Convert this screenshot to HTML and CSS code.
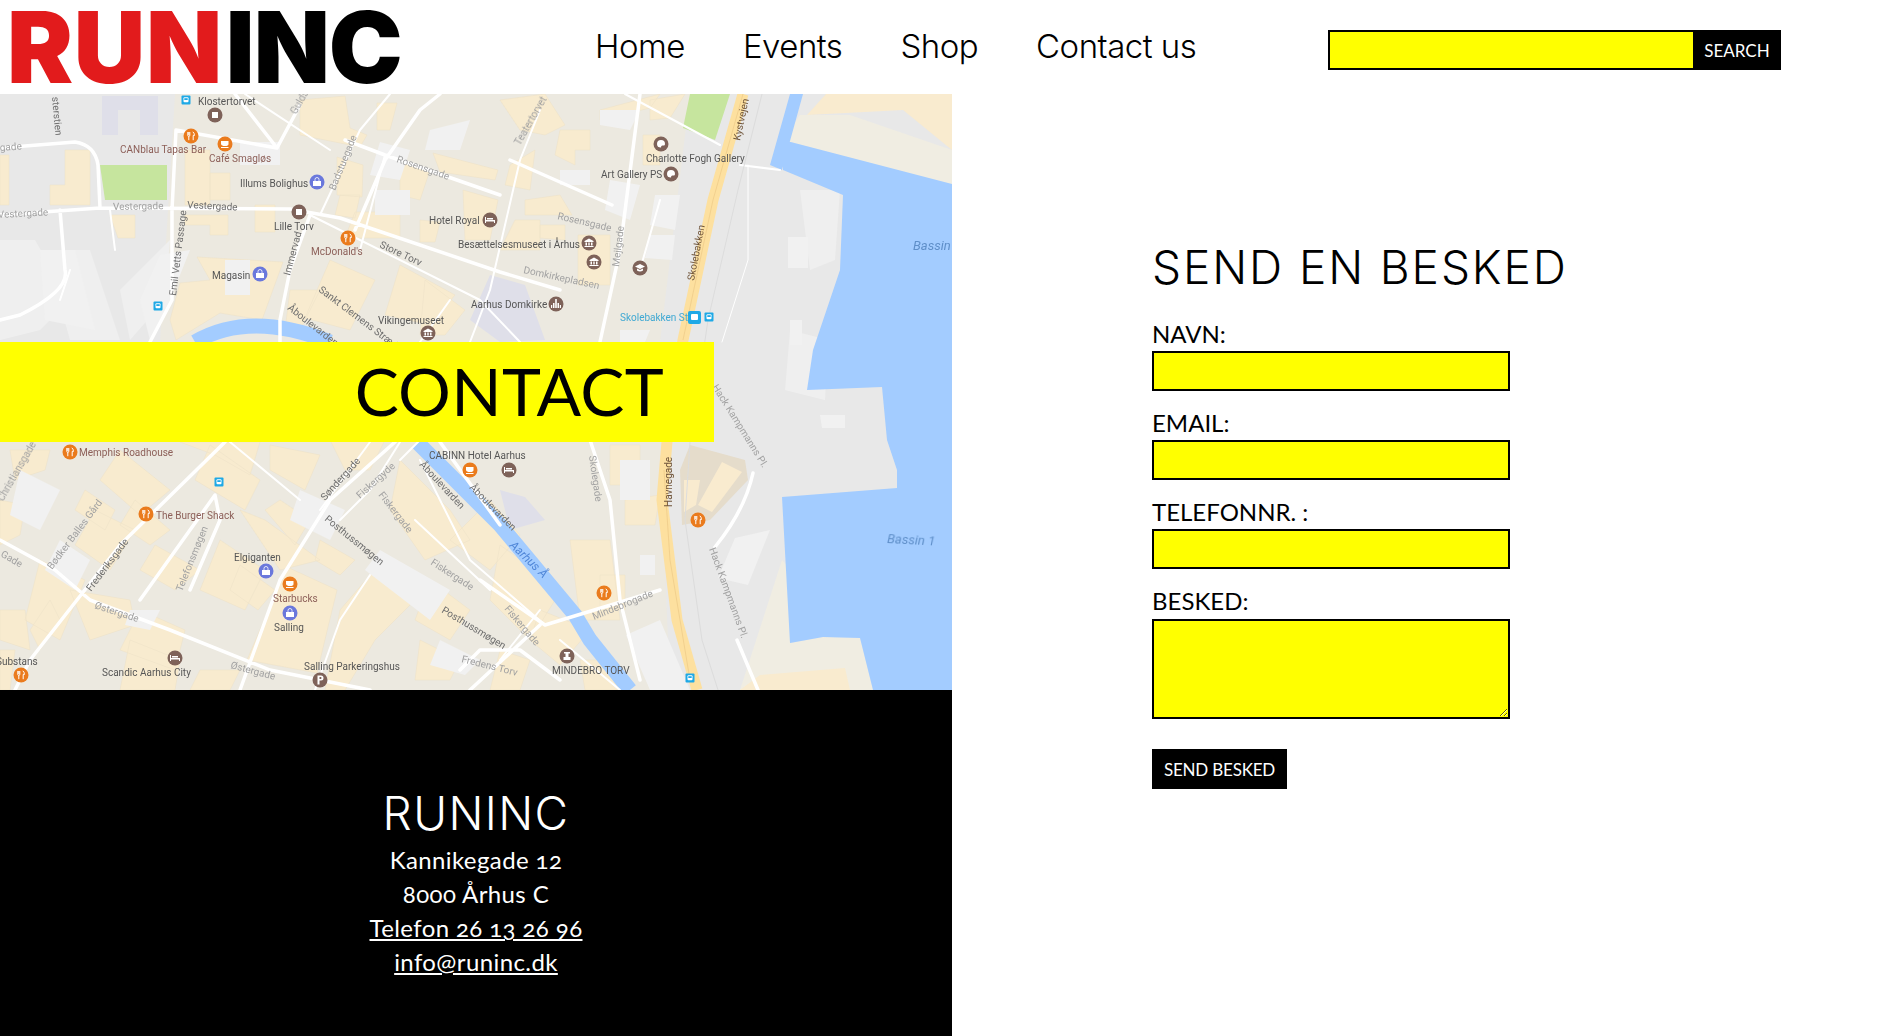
FILE: index.html
```html
<!DOCTYPE html>
<html lang="da">
<head>
<meta charset="utf-8">
<title>RUNINC – Contact</title>
<link rel="stylesheet" href="styles.css">
</head>
<body>
<header class="site-header">
  <a class="logo" href="#"><span class="logo-run">RUN</span><span class="logo-inc">INC</span></a>
  <nav class="nav">
    <a href="#">Home</a>
    <a href="#">Events</a>
    <a href="#">Shop</a>
    <a href="#">Contact us</a>
  </nav>
  <form class="search">
    <input class="search-input" type="text" aria-label="Search">
    <button class="search-btn" type="button">SEARCH</button>
  </form>
</header>
<main class="page">
  <div class="left">
    <section class="map">
      <svg class="map-svg" viewBox="0 94 952 596" width="952" height="596" xmlns="http://www.w3.org/2000/svg">
        <defs>
          <g id="fork"><circle r="7.5" class="i-orange"/><path class="i-glyph" d="M-3.2-4v3.2q0 1.2 1 1.5V4.2M-2.2-4v3M-1.2-4v3.2q0 1.200-1 1.500M1.800-4.200q1.600 1 1.600 3.700H2.200V4.200"/></g>
          <g id="cup"><circle r="7.500" class="i-orange"/><path class="i-fill" d="M-4-3H3.500V0Q3.500 2-0 2T-4 0ZM-4 3H3.500V4H-4Z"/></g>
          <g id="square"><circle r="7.500" class="i-brown"/><rect x="-3" y="-3" width="6" height="6" class="i-fill"/></g>
          <g id="bed"><circle r="7.500" class="i-brown"/><path class="i-fill" d="M-5-3H-4V0H5V3H4V1.500H-4V3H-5ZM-3-2H3V-.5H-3Z"/></g>
          <g id="museum"><circle r="7.500" class="i-brown"/><path class="i-fill" d="M0-4.500L4.500-2V-1H-4.500V-2ZM-3.500-.5H-2V2.500H-3.500ZM-.7-.5H.7V2.500H-.7ZM2-.5H3.500V2.500H2ZM-4.500 3H4.500V4H-4.500Z"/></g>
          <g id="art"><circle r="7.500" class="i-brown"/><path class="i-fill" d="M-4 0Q-4-4 0-4T4 0Q4 2 2 1.500T0 3.500Q-4 3.500-4 0Z"/></g>
          <g id="school"><circle r="7.500" class="i-brown"/><path class="i-fill" d="M0-4L5-1.500 0 1-5-1.500ZM-3 .5L0 2 3 .5V2.500Q0 4.500-3 2.500Z"/></g>
          <g id="church"><circle r="7.500" class="i-brown"/><path class="i-fill" d="M-.8-5H.8V4H-.8ZM-3-1H-1.500V4H-3ZM1.500-1H3V4H1.500ZM-5 1H-3.800V4H-5ZM3.800 1H5V4H3.800Z"/></g>
          <g id="monument"><circle r="7.500" class="i-brown"/><path class="i-fill" d="M-3-4H3V-2.500H1.500V1H3.500V4H-3.500V1H-1.500V-2.500H-3Z"/></g>
          <g id="parking"><circle r="7.500" class="i-brown"/><path class="i-fill" d="M-2.500-4.500H1Q3.500-4.500 3.500-2T1 .5H-.5V4.500H-2.500ZM-.5-3V-1H.8Q1.500-1 1.500-2T.8-3Z"/></g>
          <g id="bag"><circle r="7.500" class="i-blue"/><path class="i-fill" d="M-4-1H4V4H-4Z"/><path class="i-bagline" d="M-2-1V-2.500Q-2-4.500 0-4.500T2-2.500V-1"/></g>
          <g id="bus"><rect x="-4.500" y="-4.500" width="9" height="9" rx="1" class="i-sky"/><rect x="-2.500" y="-2.800" width="5" height="5" rx="1" class="i-fill"/><rect x="-1.700" y="-1.800" width="3.400" height="1.800" class="i-sky"/></g>
        </defs>
        <g class="map-art">
          <rect x="0" y="94" width="952" height="596" class="m-ground"/>
          <path class="m-city" d="M175 94H690L660 342H160ZM0 442H660L670 690H0Z"/>
          <path class="m-beige" d="M850 115L952 150V185L783 140 800 115ZM740 690L782 560 800 580 790 643 823 637 860 638 873 690Z"/>
          <path class="m-tan-light" d="M807 115L826 94H952V150L903 110Z"/>
          <path class="m-tan-light" d="M740 690L760 675 845 668 850 690Z"/>
          <path class="m-light" d="M0 240H35L70 300 40 330 0 340ZM90 250L120 340H70L45 250ZM120 290L170 240 165 300 130 340ZM790 330L828 340 825 400 785 390ZM800 190H840L835 260 810 270Z"/>
          <path class="m-purple" d="M102 96H158V135H140V110H118V135H102ZM490 275L525 285 545 340 500 342 470 320ZM500 490L525 497 545 520 510 530Z"/>
          <path class="m-bld" d="M0 155H9V205H0ZM65 150H90V205H50V185H65ZM110 215H135V238H118ZM185 150H210V205H185ZM210 173H230V200H210ZM185 215H228V235H210V225H185ZM255 205H275V232H255ZM197 257L283 262 262 320 220 313 176 340 170 320 180 283 210 280ZM300 100L345 96 350 128 367 135 360 147 300 135ZM377 103H397L390 130H377ZM337 157L363 165 362 197 337 195ZM340 195H360L355 218 335 215ZM400 160L430 170 420 200 400 195ZM355 212H400V238H345ZM420 220L440 222 435 242H420ZM433 153L498 170 495 180 440 172ZM463 190L498 200 490 240 465 240ZM330 260L375 280 350 330 305 318ZM400 265L455 295 430 325 385 315ZM290 290L320 290 300 330H285ZM425 280L465 310 445 335H420ZM500 100L545 94 565 125 545 135 520 130ZM560 130H590V150H575V165L555 155ZM510 165L535 150 530 190 505 185ZM525 200L560 195 572 215H525ZM578 235H610V285H578ZM540 225H565V240L540 238ZM515 220H540V250H500ZM650 100L685 94 670 118 650 120ZM600 110L660 94 650 108 600 120ZM643 135H660V165H643ZM0 500L25 505 20 535 0 545ZM120 450L170 490 140 515 100 480ZM135 500L170 530 150 545 120 525ZM85 490L115 510 105 530 75 510ZM210 445L260 480 245 510 195 480ZM95 510L135 530 110 570 75 545ZM40 560L85 580 60 640 25 620ZM0 610H25L30 650 0 640ZM70 590L130 600 135 625 90 640ZM140 610L185 630 175 670 120 650ZM220 540L265 570 245 610 200 590ZM265 520L320 560 280 570 240 510ZM240 565L275 590 258 610 230 590ZM287 567L337 590 328 627 317 673 247 660ZM377 567L400 580 415 600 375 640 345 690H325L340 610ZM130 640L180 660 175 690H120ZM200 670H240L230 690H190ZM0 650H15L10 690H0ZM400 460L450 510 470 540 425 560 390 510ZM450 540L490 500 520 535 490 570ZM500 545L535 570 555 600 530 640 490 600ZM540 610L590 630 560 665 530 640ZM570 540H610L620 620H580ZM625 500L660 495 655 525 625 525ZM610 445H640V485H610ZM600 575H625V610H600ZM500 650L530 660 520 690H490ZM580 660H600L620 690H585ZM420 640L460 660 450 680H415ZM330 440L390 430 370 470 345 470ZM180 442H260L250 475 215 455ZM270 445L320 455 305 490 270 470ZM280 500L310 520 295 545 265 510ZM320 540L355 560 340 575 315 560ZM10 450H50L45 470 15 480ZM50 600L60 620 40 650 30 630ZM155 545L200 570 175 590 140 570ZM430 580L470 610 450 640 415 620Z"/>
          <path class="m-church" d="M690 445L745 460 748 480 710 520 682 525 680 470Z"/>
          <path class="m-tan-light" d="M722 462L742 472 712 512 698 505ZM684 480H700L696 505 684 512Z"/>
          <path class="m-lighter" d="M770 530L748 585 718 578 735 538ZM788 237H808V268H788ZM790 320H802V345H790ZM655 195H680L675 230 650 225ZM650 235H675L672 260 645 258ZM620 330H650L645 342H620ZM600 110H640L630 130 600 125ZM626 635L660 620 690 690 650 690ZM620 460H650V500H620ZM640 555H655V575H640ZM40 250H75L95 330 45 320ZM140 300L160 255 190 250 170 300 150 340ZM820 415H845V428H822ZM375 190H410V215H375ZM225 295H250V260H225ZM380 550L450 590 430 620 365 570ZM300 490L345 510 330 540 290 520ZM440 640L480 660 465 675 430 665ZM240 142H280V165H240ZM380 142L410 150 400 180 370 175ZM430 130L470 120 460 150 425 150ZM560 170H590V185H560ZM610 180L640 185 630 220 605 210ZM20 470L60 490 40 530 10 515ZM60 540L90 560 75 590 45 570ZM130 610H160L150 630 125 625Z"/>
          <path class="m-green" d="M100 165L167 165 167 200 105 200ZM690 94H730L715 140 683 128Z"/>
          <path class="m-water" d="M790 94H803L782 170 770 165ZM783 140L952 184V690H873L860 638 823 637 790 643 782 497 897 488 897 470 887 440 882 387 807 390 813 350 840 270 843 195 783 170Z"/>
          <path class="m-river" d="M417 442L500 525 575 615 590 640 630 690M195 342Q250 310 330 342"/>
          <g class="m-roads">
            <path class="r5" d="M0 215L100 208 290 209 340 218 500 272 560 290M0 148L75 142Q95 145 98 165L100 208M176 130L277 148M277 148L235 94M277 148L300 105M176 130L172 210V300L150 342M60 210L65 270Q70 290 20 315L0 320M355 230L385 160 420 110 440 94M345 140L385 155 500 195M280 342L280 320 290 270 310 215M640 94L620 250 600 342M510 160L612 205M225 442L120 545 30 660 15 690M0 540L55 570 90 600 170 630 270 670 370 690M140 600L215 495 220 520 190 590M395 442L330 500 280 580 240 690M440 442L500 525M590 440L610 500 620 600 640 680M460 670L480 650H520L560 680M753 473Q745 510 715 547M737 640L758 690M480 580L545 625 660 590M540 625L470 690"/>
            <path class="r3" d="M310 215L480 300 520 342M320 215L360 130 390 94M245 94L330 150M625 94L720 145M660 200L640 270M540 110L520 160M60 300L70 270M110 210L115 250M400 460L440 420M540 610L500 660M415 520L490 590M230 442L300 500M370 442L320 510M400 442L370 490 340 520M420 460L470 560 545 625M385 155L360 250M450 300L420 342M520 160L490 290 470 342M370 575L340 620 315 690M560 640L620 690M780 170L740 165"/>
            <path class="r1" d="M748 165V260L722 342"/>
          </g>
          <path class="m-main" d="M743 94L713 200 683 340 667 442 662 500 677 620 697 690"/>
          <path class="m-main-line" d="M743 94L713 200 683 340M664 470L670 560 690 680"/>
          <path class="m-grey-line" d="M762 94L738 190 708 320 690 442 685 520 702 640 718 690"/>
        </g>
        <g class="labels">
          <text class="l-dark" x="198" y="105">Klostertorvet</text>
          <text class="l-brown" x="120" y="153">CANblau Tapas Bar</text>
          <text class="l-brown" x="209" y="162">Café Smagløs</text>
          <text class="l-dark" x="240" y="187">Illums Bolighus</text>
          <text class="l-road" transform="translate(113 210) rotate(-1)">Vestergade</text>
          <text class="l-dark2" transform="translate(187 208) rotate(3)">Vestergade</text>
          <text class="l-road" transform="translate(-2 218) rotate(-3)">Vestergade</text>
          <text class="l-road" transform="translate(0 151) rotate(-4)">gade</text>
          <text class="l-dark" x="274" y="230">Lille Torv</text>
          <text class="l-brown" x="311" y="255">McDonald's</text>
          <text class="l-dark2" transform="translate(379 247) rotate(25)">Store Torv</text>
          <text class="l-dark" x="212" y="279">Magasin</text>
          <text class="l-dark2" transform="translate(176 296) rotate(-83)">Emil Vetts Passage</text>
          <text class="l-dark2" transform="translate(290 276) rotate(-75)">Immervad</text>
          <text class="l-road" transform="translate(335 191) rotate(-68)">Badstuegade</text>
          <text class="l-road" transform="translate(396 162) rotate(19)">Rosensgade</text>
          <text class="l-dark" x="429" y="224">Hotel Royal</text>
          <text class="l-dark" x="458" y="248">Besættelsesmuseet i Århus</text>
          <text class="l-dark2" transform="translate(318 291) rotate(37)">Sankt Clemens Stræde</text>
          <text class="l-dark2" transform="translate(287 309) rotate(38)">Åboulevarden</text>
          <text class="l-dark" x="378" y="324">Vikingemuseet</text>
          <text class="l-dark" x="471" y="308">Aarhus Domkirke</text>
          <text class="l-dark2" transform="translate(52 97) rotate(85)">sterstien</text>
          <text class="l-road" transform="translate(296 115) rotate(-60)">Guldsmedgade</text>
          <text class="l-road" transform="translate(520 146) rotate(-60)">Teatertorvet</text>
          <text class="l-road" transform="translate(557 219) rotate(13)">Rosensgade</text>
          <text class="l-road" transform="translate(523 273) rotate(12)">Domkirkepladsen</text>
          <text class="l-road" transform="translate(619 267) rotate(-83)">Mejlgade</text>
          <text class="l-dark" x="646" y="162">Charlotte Fogh Gallery</text>
          <text class="l-dark" x="601" y="178">Art Gallery PS</text>
          <text class="l-brown2" transform="translate(740 141) rotate(-78)">Kystvejen</text>
          <text class="l-brown2" transform="translate(694 281) rotate(-79)">Skolebakken</text>
          <text class="l-sky" x="620" y="321">Skolebakken St.</text>
          <text class="l-water" x="913" y="250">Bassin</text>
          <text class="l-brown" x="79" y="456">Memphis Roadhouse</text>
          <text class="l-road" transform="translate(3 502) rotate(-60)">Christiansgade</text>
          <text class="l-brown" x="156" y="519">The Burger Shack</text>
          <text class="l-road" transform="translate(52 570) rotate(-53)">Bødker Balles Gård</text>
          <text class="l-dark2" transform="translate(91 592) rotate(-53)">Frederiksgade</text>
          <text class="l-road" transform="translate(182 592) rotate(-68)">Telefonsmøgen</text>
          <text class="l-road" transform="translate(0 556) rotate(30)">Gade</text>
          <text class="l-dark" x="234" y="561">Elgiganten</text>
          <text class="l-brown" x="273" y="602">Starbucks</text>
          <text class="l-dark" x="274" y="631">Salling</text>
          <text class="l-road" transform="translate(94 608) rotate(18)">Østergade</text>
          <text class="l-road" transform="translate(230 668) rotate(15)">Østergade</text>
          <text class="l-dark2" transform="translate(325 501) rotate(-48)">Søndergade</text>
          <text class="l-road" transform="translate(360 499) rotate(-42)">Fiskergyde</text>
          <text class="l-road" transform="translate(378 495) rotate(52)">Fiskergade</text>
          <text class="l-dark2" transform="translate(324 520) rotate(39)">Posthussmøgen</text>
          <text class="l-road" transform="translate(430 564) rotate(33)">Fiskergade</text>
          <text class="l-dark2" transform="translate(441 612) rotate(31)">Posthussmøgen</text>
          <text class="l-dark2" transform="translate(419 465) rotate(47)">Åboulevarden</text>
          <text class="l-dark2" transform="translate(469 488) rotate(45)">Åboulevarden</text>
          <text class="l-dark" x="429" y="459">CABINN Hotel Aarhus</text>
          <text class="l-dark" x="-4" y="665">Substans</text>
          <text class="l-dark" x="102" y="676">Scandic Aarhus City</text>
          <text class="l-dark" x="304" y="670">Salling Parkeringshus</text>
          <text class="l-road" transform="translate(461 662) rotate(14)">Fredens Torv</text>
          <text class="l-road" transform="translate(589 456) rotate(82)">Skolegade</text>
          <text class="l-brown2" transform="translate(672 507) rotate(-90)">Havnegade</text>
          <text class="l-road" transform="translate(712 387) rotate(58)">Hack Kampmanns Pl.</text>
          <text class="l-road" transform="translate(709 549) rotate(70)">Hack Kampmanns Pl.</text>
          <text class="l-water" transform="translate(887 543) rotate(3)">Bassin 1</text>
          <text class="l-river" transform="translate(509 546) rotate(44)">Aarhus Å</text>
          <text class="l-road" transform="translate(594 620) rotate(-22)">Mindebrogade</text>
          <text class="l-road" transform="translate(504 609) rotate(50)">Fiskergade</text>
          <text class="l-dark" x="552" y="674">MINDEBRO TORV</text>
        </g>
        <g class="icons">
          <use href="#fork" x="191" y="136"/><use href="#fork" x="348" y="238"/><use href="#fork" x="70" y="452"/>
          <use href="#fork" x="146" y="514"/><use href="#fork" x="21" y="675"/><use href="#fork" x="698" y="520"/><use href="#fork" x="604" y="593"/>
          <use href="#cup" x="225" y="144"/><use href="#cup" x="470" y="470"/><use href="#cup" x="290" y="584"/>
          <use href="#square" x="215" y="115"/><use href="#square" x="299" y="212"/>
          <use href="#bed" x="490" y="220"/><use href="#bed" x="175" y="658"/><use href="#bed" x="509" y="470"/>
          <use href="#museum" x="589" y="243"/><use href="#museum" x="594" y="262"/><use href="#museum" x="428" y="333"/>
          <use href="#art" x="661" y="144"/><use href="#art" x="671" y="174"/>
          <use href="#school" x="640" y="268"/><use href="#church" x="556" y="304"/><use href="#monument" x="567" y="656"/><use href="#parking" x="320" y="680"/>
          <use href="#bag" x="317" y="182"/><use href="#bag" x="260" y="274"/><use href="#bag" x="266" y="571"/><use href="#bag" x="290" y="613"/>
          <use href="#bus" x="186" y="100"/><use href="#bus" x="158" y="306"/><use href="#bus" x="219" y="482"/><use href="#bus" x="709" y="317"/><use href="#bus" x="690" y="678"/>
          <rect x="688" y="311" width="13" height="13" rx="2" class="i-sky"/><rect x="691" y="314" width="7" height="6" rx="1" class="i-fill"/>
        </g>
      </svg>
      <h1 class="banner">CONTACT</h1>
    </section>
    <footer class="footer">
      <h2 class="footer-title">RUNINC</h2>
      <p class="footer-line">Kannikegade 12</p>
      <p class="footer-line">8000 Århus C</p>
      <a class="footer-line footer-link" href="#">Telefon 26 13 26 96</a>
      <a class="footer-line footer-link" href="#">info@runinc.dk</a>
    </footer>
  </div>
  <section class="contact">
    <h2 class="contact-title">SEND EN BESKED</h2>
    <form class="contact-form">
      <label class="field"><span class="field-label">NAVN:</span><input class="field-input" type="text"></label>
      <label class="field"><span class="field-label">EMAIL:</span><input class="field-input" type="text"></label>
      <label class="field"><span class="field-label">TELEFONNR. :</span><input class="field-input" type="text"></label>
      <label class="field"><span class="field-label">BESKED:</span><textarea class="field-input field-area"></textarea></label>
      <button class="send-btn" type="button">SEND BESKED</button>
    </form>
  </section>
</main>
</body>
</html>
```
FILE: styles.css
```css
* { box-sizing: border-box; }
html, body { margin: 0; padding: 0; background: #fff; color: #000; overflow: hidden; }
body { font-family: "Lato", "Liberation Sans", sans-serif; height: 1036px; }
a { color: inherit; }

.site-header {
  display: grid;
  grid-template-columns: 595px 733px 453px;
  align-items: center;
  height: 94px;
}
.logo {
  display: flex;
  padding-left: 7px;
  font-family: "Inter", sans-serif;
  font-weight: 900;
  font-size: 99px;
  line-height: 94px;
  letter-spacing: -1px;
  text-decoration: none;
}
.logo-run { color: #e21b1c; margin-right: 3px; letter-spacing: .7px; }
.logo-inc { color: #000; }
.nav { display: flex; gap: 58px; margin-top: -2px; font-family: "Inter", sans-serif; font-size: 33px; font-weight: 300; letter-spacing: -.5px; }
.nav a { text-decoration: none; }
.search { display: flex; height: 40px; margin-top: 6px; }
.search-input {
  width: 365px;
  height: 40px;
  border: 2px solid #000;
  background: #ff0;
  border-right: 0;
  padding: 0;
}
.search-btn {
  flex: 1;
  border: 0;
  background: #000;
  color: #fff;
  font: 400 17px "Lato", sans-serif;
  padding: 0;
}

.page { display: grid; grid-template-columns: 952px 1fr; height: 942px; }
.left { display: flex; flex-direction: column; }
.map { position: relative; height: 596px; overflow: hidden; }
.map-svg { display: block; }
.map-art { filter: blur(.7px); }
.labels { filter: blur(.25px); }
.banner {
  position: absolute;
  left: 0;
  top: 248px;
  width: 714px;
  height: 100px;
  margin: 0;
  padding-right: 50px;
  background: #ff0;
  text-align: right;
  font-size: 66px;
  font-weight: 400;
  letter-spacing: .3px;
  line-height: 97px;
}

.m-ground { fill: #e8e8e8; }
.m-city { fill: #ece9e0; }
.m-beige { fill: #f0ede2; }
.m-tan-light { fill: #f9ebcf; }
.m-light { fill: #efefef; }
.m-lighter { fill: #f1f1f1; }
.m-purple { fill: #dfdfe9; }
.m-bld { fill: #f8ebcf; stroke: #ece0c6; stroke-width: .5; }
.m-church { fill: #e5dccb; }
.m-green { fill: #c6e59e; }
.m-water { fill: #a3ccff; }
.m-river { fill: none; stroke: #a3ccff; stroke-width: 15; }
.m-roads { fill: none; stroke: #fff; stroke-linecap: round; stroke-linejoin: round; }
.r5 { stroke-width: 3.500; }
.r3 { stroke-width: 2; }
.r1 { stroke-width: 1; }
.m-main { fill: none; stroke: #fde09f; stroke-width: 11; }
.m-main-line { fill: none; stroke: #ecc987; stroke-width: .7; }
.m-grey-line { fill: none; stroke: #dcdcdc; stroke-width: 1; }

.labels text { font-family: "Roboto", sans-serif; font-size: 10px; }
.l-dark { fill: #565656; }
.l-dark2 { fill: #6e6e6e; }
.l-road { fill: #a2a2a2; }
.l-brown { fill: #8c5f58; }
.l-brown2 { fill: #70553a; }
.l-sky { fill: #41a9d3; }
.labels .l-water { fill: #5f8fc9; font-style: italic; font-size: 13px; }
.labels .l-river { fill: #4f86d8; font-style: italic; font-size: 12px; }
.i-orange { fill: #ea7b1d; }
.i-brown { fill: #7e6259; }
.i-blue { fill: #6a78dc; }
.i-sky { fill: #1fa9e6; }
.i-fill { fill: #fff; }
.i-glyph { fill: none; stroke: #fff; stroke-width: 1; }
.i-bagline { fill: none; stroke: #fff; stroke-width: .8; }

.footer {
  flex: 1;
  display: flex;
  flex-direction: column;
  align-items: center;
  background: #000;
  color: #fff;
  padding-top: 93px;
}
.footer-title { margin: 0; font-family: "Inter", sans-serif; font-size: 46px; font-weight: 300; letter-spacing: 1.400px; line-height: 60px; }
.footer-line { margin: 0; font-size: 24px; font-weight: 400; letter-spacing: .4px; line-height: 34px; font-variant-numeric: oldstyle-nums; }

.contact { padding: 145px 0 0 200px; }
.contact-title { margin: 0 0 20px; font-family: "Inter", sans-serif; font-size: 46px; font-weight: 300; letter-spacing: 1.900px; line-height: 56px; }
.contact-form { display: flex; flex-direction: column; align-items: flex-start; }
.field { display: flex; flex-direction: column; margin-bottom: 13px; }
.field-label { font-size: 24px; line-height: 34px; padding-top: 2px; }
.field-input {
  display: block;
  width: 358px;
  height: 40px;
  border: 2px solid #000;
  background: #ff0;
  padding: 0;
  margin: 0;
}
.field-area { height: 100px; margin-top: 1px; }
.send-btn {
  margin-top: 17px;
  width: 135px;
  height: 40px;
  border: 0;
  background: #000;
  color: #fff;
  font: 400 17px "Lato", sans-serif;
  letter-spacing: -.2px;
  padding: 0;
}
```
